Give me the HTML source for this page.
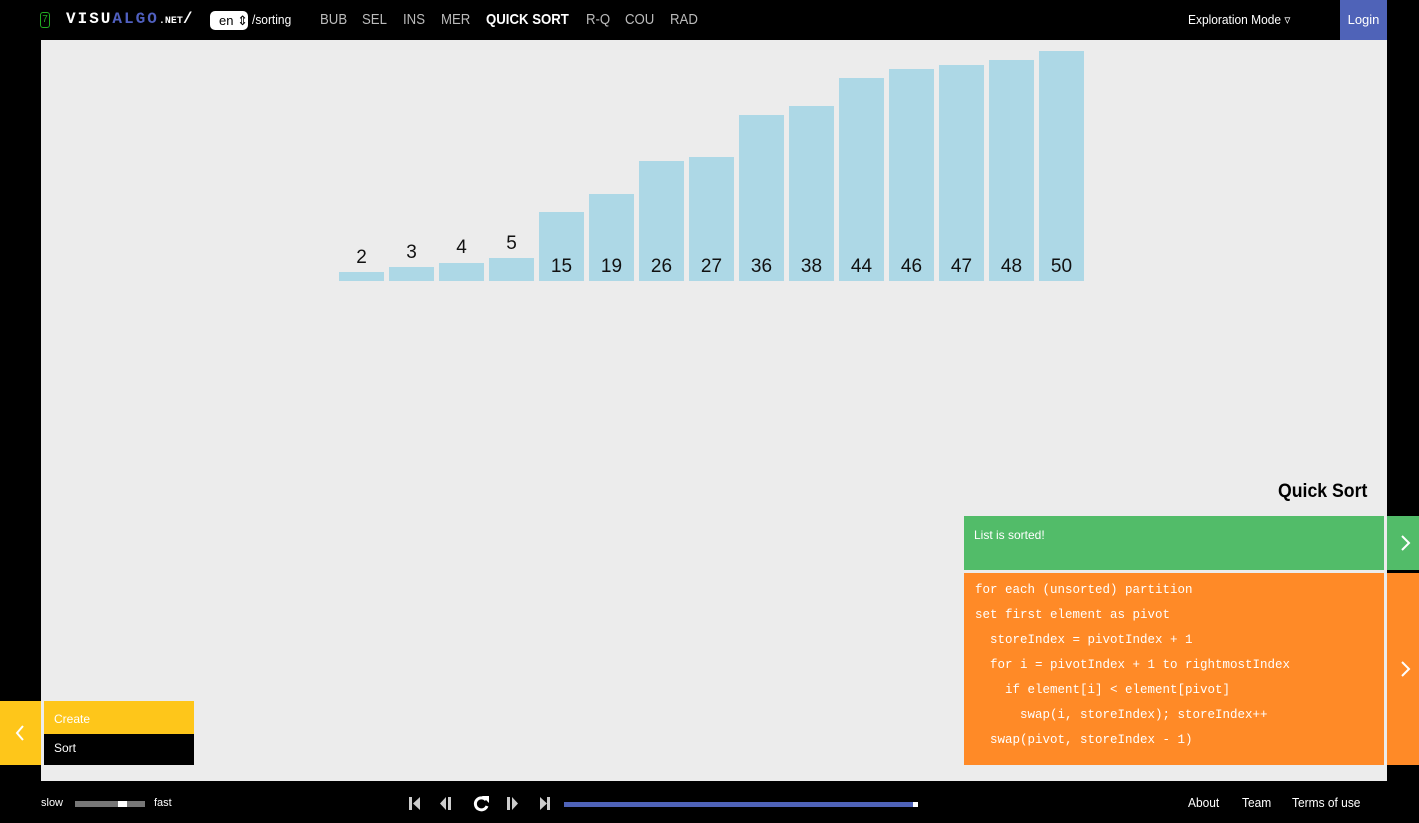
<!DOCTYPE html>
<html><head><meta charset="utf-8"><style>
*{margin:0;padding:0;box-sizing:border-box}
body{width:1419px;height:823px;background:#000;position:relative;overflow:hidden;font-family:"Liberation Sans",sans-serif;color:#fff}
.a{position:absolute}
.nav{font-size:15px;color:#bbb;top:11px;transform:scaleX(0.88);transform-origin:left}
.bar{position:absolute;width:45px;background:#add8e6;bottom:542px}
.lbl{position:absolute;width:45px;text-align:center;font-size:19px;color:#111}
.code{font-family:"Liberation Mono",monospace;font-size:12.5px;color:#fff;position:absolute;left:975px}
.f{font-size:13px;transform:scaleX(0.92);transform-origin:left}
</style></head><body>
<div class="a" style="left:41px;top:40px;width:1346px;height:741px;background:#ececec"></div>
<div class="a" style="left:40px;top:12px;width:10px;height:16px;border:1px solid #2a2;border-radius:3px;font-size:10px;color:#2a2;text-align:center;line-height:14px">7</div>
<div class="a" style="left:66px;top:10px;font-family:'Liberation Mono',monospace;font-weight:bold;font-size:16px;letter-spacing:2px">VISU<span style="color:#5060c0">ALGO</span><span style="font-size:10px;letter-spacing:0">.NET</span>/</div>
<div class="a" style="left:210px;top:11px;width:38px;height:19px;background:#fff;border-radius:5px;color:#000;font-size:13px;padding:2px 0 0 9px">en ⇕</div>
<div class="a f" style="left:252px;top:12px">/sorting</div>
<div class="a nav" style="left:320px">BUB</div>
<div class="a nav" style="left:362px">SEL</div>
<div class="a nav" style="left:403px">INS</div>
<div class="a nav" style="left:441px">MER</div>
<div class="a nav" style="left:486px;color:#fff;font-weight:bold">QUICK SORT</div>
<div class="a nav" style="left:586px">R-Q</div>
<div class="a nav" style="left:625px">COU</div>
<div class="a nav" style="left:670px">RAD</div>
<div class="a f" style="left:1188px;top:12px">Exploration Mode ▿</div>
<div class="a" style="left:1340px;top:0;width:47px;height:40px;background:#4f63b8;font-size:13px;text-align:center;line-height:40px">Login</div>

<div class="bar" style="left:339px;height:9px"></div><div class="lbl" style="left:339px;top:247px">2</div>
<div class="bar" style="left:389px;height:14px"></div><div class="lbl" style="left:389px;top:242px">3</div>
<div class="bar" style="left:439px;height:18px"></div><div class="lbl" style="left:439px;top:237px">4</div>
<div class="bar" style="left:489px;height:23px"></div><div class="lbl" style="left:489px;top:233px">5</div>
<div class="bar" style="left:539px;height:69px"></div><div class="lbl" style="left:539px;top:256px">15</div>
<div class="bar" style="left:589px;height:87px"></div><div class="lbl" style="left:589px;top:256px">19</div>
<div class="bar" style="left:639px;height:120px"></div><div class="lbl" style="left:639px;top:256px">26</div>
<div class="bar" style="left:689px;height:124px"></div><div class="lbl" style="left:689px;top:256px">27</div>
<div class="bar" style="left:739px;height:166px"></div><div class="lbl" style="left:739px;top:256px">36</div>
<div class="bar" style="left:789px;height:175px"></div><div class="lbl" style="left:789px;top:256px">38</div>
<div class="bar" style="left:839px;height:203px"></div><div class="lbl" style="left:839px;top:256px">44</div>
<div class="bar" style="left:889px;height:212px"></div><div class="lbl" style="left:889px;top:256px">46</div>
<div class="bar" style="left:939px;height:216px"></div><div class="lbl" style="left:939px;top:256px">47</div>
<div class="bar" style="left:989px;height:221px"></div><div class="lbl" style="left:989px;top:256px">48</div>
<div class="bar" style="left:1039px;height:230px"></div><div class="lbl" style="left:1039px;top:256px">50</div>

<div class="a" style="left:1278px;top:481px;font-size:19px;font-weight:bold;color:#000;transform:scaleX(0.93);transform-origin:left">Quick Sort</div>
<div class="a" style="left:964px;top:516px;width:420px;height:54px;background:#52bc69;font-size:12px;padding:12px 10px">List is sorted!</div>
<div class="a" style="left:1387px;top:516px;width:32px;height:54px;background:#52bc69"><svg width="32" height="54"><path d="M15 20l7 7-7 7" stroke="#fff" stroke-width="2" fill="none"/></svg></div>
<div class="a" style="left:964px;top:573px;width:420px;height:192px;background:#ff8a27"></div>
<div class="a" style="left:1387px;top:573px;width:32px;height:192px;background:#ff8a27"><svg width="32" height="192"><path d="M15 89l7 7-7 7" stroke="#fff" stroke-width="2" fill="none"/></svg></div>
<div class="code" style="top:583px">for each (unsorted) partition</div>
<div class="code" style="top:608px">set first element as pivot</div>
<div class="code" style="top:633px">&nbsp;&nbsp;storeIndex = pivotIndex + 1</div>
<div class="code" style="top:658px">&nbsp;&nbsp;for i = pivotIndex + 1 to rightmostIndex</div>
<div class="code" style="top:683px">&nbsp;&nbsp;&nbsp;&nbsp;if element[i] &lt; element[pivot]</div>
<div class="code" style="top:708px">&nbsp;&nbsp;&nbsp;&nbsp;&nbsp;&nbsp;swap(i, storeIndex); storeIndex++</div>
<div class="code" style="top:733px">&nbsp;&nbsp;swap(pivot, storeIndex - 1)</div>

<div class="a" style="left:0;top:701px;width:41px;height:64px;background:#fec61a"><svg width="41" height="64"><path d="M23 25l-6 7 6 7" stroke="#fff" stroke-width="2" fill="none"/></svg></div>
<div class="a" style="left:44px;top:701px;width:150px;height:33px;background:#fec61a;font-size:12px;padding:11px 10px">Create</div>
<div class="a" style="left:44px;top:734px;width:150px;height:31px;background:#000;font-size:12px;padding:7px 10px">Sort</div>

<div class="a" style="left:41px;top:797px;font-size:11px">slow</div>
<div class="a" style="left:75px;top:801px;width:70px;height:6px;background:#777"></div>
<div class="a" style="left:118px;top:801px;width:9px;height:6px;background:#fff"></div>
<div class="a" style="left:154px;top:797px;font-size:11px">fast</div>
<svg class="a" style="left:400px;top:790px" width="160" height="28" fill="#ccc">
<rect x="9" y="7" width="3" height="13"/><path d="M20 7v13l-7-6.5z"/>
<path d="M46 7v13l-6-6.5z"/><rect x="48" y="7" width="3" height="13"/>
<path d="M86 10a6 6 0 1 0 1 6" stroke="#fff" stroke-width="3" fill="none"/><path d="M82 6h7v7z" fill="#fff"/>
<rect x="107" y="7" width="3" height="13"/><path d="M112 7v13l6-6.5z"/>
<path d="M140 7v13l7-6.5z"/><rect x="147" y="7" width="3" height="13"/>
</svg>
<div class="a" style="left:564px;top:802px;width:354px;height:5px;background:#4f63b8"></div>
<div class="a" style="left:913px;top:802px;width:5px;height:5px;background:#fff"></div>
<div class="a f" style="left:1188px;top:795px">About</div>
<div class="a f" style="left:1242px;top:795px">Team</div>
<div class="a f" style="left:1292px;top:795px">Terms of use</div>
</body></html>
